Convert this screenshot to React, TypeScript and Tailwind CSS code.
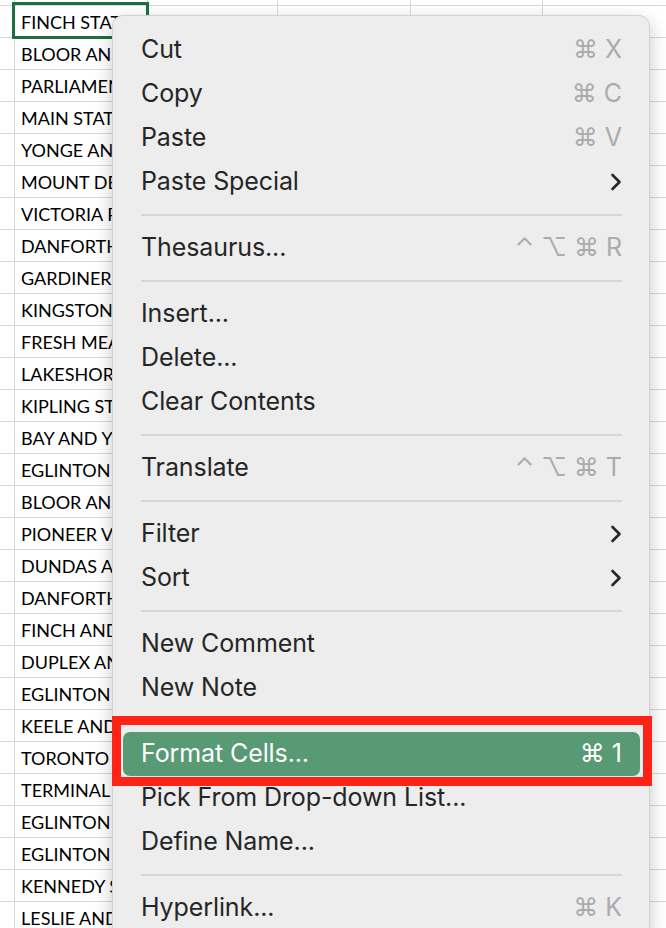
import React from "react";

type Item =
  | { sep: true }
  | { sep?: false; label: string; sc?: string[]; sub?: boolean; active?: boolean };

const items: Item[] = [
  { label: "Cut", sc: ["⌘", "X"] },
  { label: "Copy", sc: ["⌘", "C"] },
  { label: "Paste", sc: ["⌘", "V"] },
  { label: "Paste Special", sub: true },
  { sep: true },
  { label: "Thesaurus...", sc: ["⌃", "⌥", "⌘", "R"] },
  { sep: true },
  { label: "Insert..." },
  { label: "Delete..." },
  { label: "Clear Contents" },
  { sep: true },
  { label: "Translate", sc: ["⌃", "⌥", "⌘", "T"] },
  { sep: true },
  { label: "Filter", sub: true },
  { label: "Sort", sub: true },
  { sep: true },
  { label: "New Comment" },
  { label: "New Note" },
  { sep: true },
  { label: "Format Cells...", sc: ["⌘", "1"], active: true },
  { label: "Pick From Drop-down List..." },
  { label: "Define Name..." },
  { sep: true },
  { label: "Hyperlink...", sc: ["⌘", "K"] },
];

const names = [
  "FINCH STATION",
  "BLOOR AND YONGE",
  "PARLIAMENT AND KING",
  "MAIN STATION",
  "YONGE AND BLOOR",
  "MOUNT DENNIS",
  "VICTORIA PARK",
  "DANFORTH AND MAIN",
  "GARDINER EXPRESSWAY",
  "KINGSTON ROAD",
  "FRESH MEADOW",
  "LAKESHORE BLVD",
  "KIPLING STATION",
  "BAY AND YORK",
  "EGLINTON WEST",
  "BLOOR AND DUFFERIN",
  "PIONEER VILLAGE",
  "DUNDAS AND SPADINA",
  "DANFORTH AND COXWELL",
  "FINCH AND KEELE",
  "DUPLEX AND EGLINTON",
  "EGLINTON AND YONGE",
  "KEELE AND DUNDAS",
  "TORONTO UNION",
  "TERMINAL ROAD",
  "EGLINTON EAST",
  "EGLINTON STATION",
  "KENNEDY STATION",
  "LESLIE AND SHEPPARD",
];

function Chevron() {
  return (
    <svg width="12" height="18" viewBox="0 0 12 18" className="text-[#262626]">
      <path d="M2.5 2 L9.5 9 L2.5 16" fill="none" stroke="currentColor" strokeWidth="2.6" strokeLinecap="round" strokeLinejoin="round" />
    </svg>
  );
}

export default function App() {
  return (
    <div className="relative w-[666px] h-[928px] overflow-hidden bg-white">
      {/* Spreadsheet grid */}
      <div className="grid grid-cols-[15px_133px_130px_133px_132px_1fr] font-['Lato',sans-serif] text-[18px] text-black">
        {/* partial top row */}
        <div className="h-[6px] border-r border-b border-[#d7d7d7]" />
        <div className="h-[6px] border-r border-b border-[#d7d7d7]" />
        <div className="h-[6px] border-r border-b border-[#d7d7d7]" />
        <div className="h-[6px] border-r border-b border-[#d7d7d7]" />
        <div className="h-[6px] border-r border-b border-[#d7d7d7]" />
        <div className="h-[6px] border-b border-[#d7d7d7]" />
        {names.map((n, i) => (
          <React.Fragment key={i}>
            <div className="h-[32px] border-r border-b border-[#d7d7d7]" />
            <div className="h-[32px] border-r border-b border-[#d7d7d7] pl-[6px] pt-[2px] flex items-center overflow-hidden whitespace-nowrap">
              {n}
            </div>
            <div className="h-[32px] border-r border-b border-[#d7d7d7] pl-[6px] pt-[2px] flex items-center overflow-hidden whitespace-nowrap">
              {i === 0 ? "Ground Lot" : ""}
            </div>
            <div className="h-[32px] border-r border-b border-[#d7d7d7] pr-[10px] pt-[2px] flex items-center justify-end overflow-hidden whitespace-nowrap">
              {i === 0 ? "61" : ""}
            </div>
            <div className="h-[32px] border-r border-b border-[#d7d7d7] pr-[12px] pt-[2px] flex items-center justify-end overflow-hidden whitespace-nowrap">
              {i === 0 ? "14" : ""}
            </div>
            <div className="h-[32px] border-b border-[#d7d7d7]" />
          </React.Fragment>
        ))}
      </div>

      {/* selected cell */}
      <div className="absolute left-[12px] top-[2px] w-[137px] h-[37px] border-[3px] border-[#1f6e43]" />

      {/* Context menu */}
      <div className="absolute left-[112px] top-[15px] w-[538px] rounded-[11px] bg-[#ededed] border border-[#d2d2d2] shadow-[0_6px_18px_rgba(0,0,0,0.22)] pt-[12px] pb-[10px] pl-[10px] pr-[9px] font-['Inter','DejaVu_Sans',sans-serif] text-[25px] text-[#262626]">
        {items.map((it, i) =>
          it.sep ? (
            <div key={i} className="h-[22px] flex items-center px-[18px]">
              <div className="h-[2px] w-full bg-[#d6d6d6]" />
            </div>
          ) : (
            <div
              key={i}
              className={
                "h-[44px] flex items-center justify-between px-[18px] rounded-[7px] " +
                (it.active ? "bg-[#579a73] text-white" : "")
              }
            >
              <span className="tracking-[-0.1px]">{it.label}</span>
              {it.sc ? (
                <span className={"flex items-center gap-[7px] text-[25px] " + (it.active ? "text-white" : "text-[#ababab]")}>
                  {it.sc.map((s, j) => (
                    <span key={j}>{s}</span>
                  ))}
                </span>
              ) : it.sub ? (
                <Chevron />
              ) : null}
            </div>
          )
        )}
      </div>

      {/* red highlight box */}
      <div className="absolute left-[112px] top-[716px] w-[540px] h-[70px] border-[9px] border-[#ff2317]" />
    </div>
  );
}
